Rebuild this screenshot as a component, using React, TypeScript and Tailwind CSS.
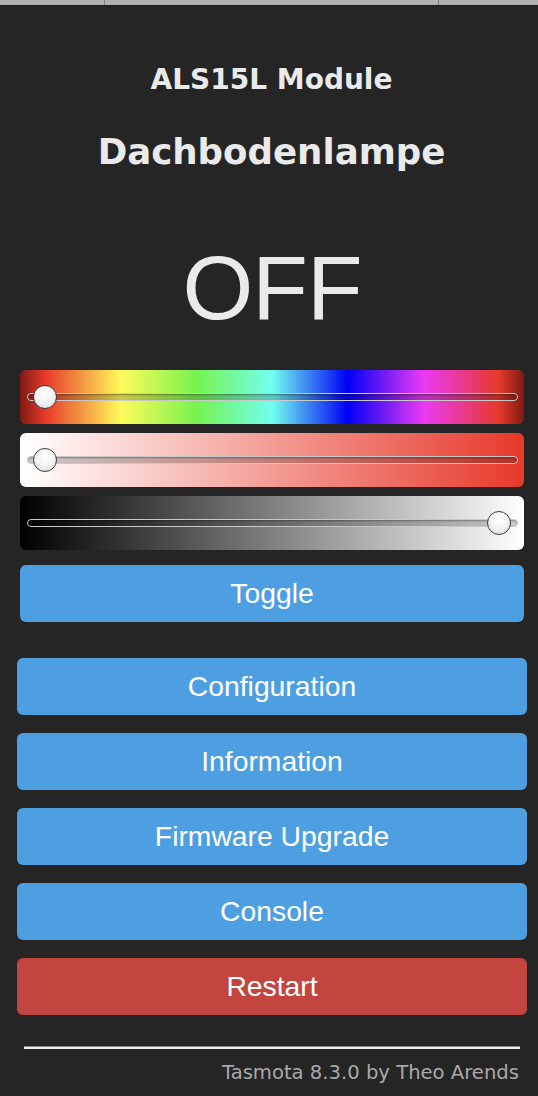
import React from "react";

const hue =
  "linear-gradient(to right, #7d1a12 0%, #e8392b 5%, #fffb5a 20%, #77f34f 35%, #72fff0 50%, #0000f5 65%, #e93af4 80%, #e8392b 95%, #7d1a12 100%)";

function Slider({ bg, thumbRight }: { bg: string; thumbRight?: boolean }) {
  return (
    <div className="relative h-[54px] rounded-[6px] flex items-center" style={{ background: bg }}>
      <div className="ml-[7px] mr-[6px] flex-1 h-[8px] rounded-full border border-[#c9c9c9] bg-black/20 shadow-[inset_0_1px_2px_rgba(0,0,0,0.35)]" />
      <div
        className={
          "absolute top-[15px] w-[24px] h-[24px] rounded-full border-[1.5px] border-[#3c3c3c] bg-[radial-gradient(circle_at_50%_35%,#ffffff_0%,#f2f2f2_50%,#d6d6d6_100%)] " +
          (thumbRight ? "right-[13px]" : "left-[13px]")
        }
      />
    </div>
  );
}

function Btn({ label, red }: { label: string; red?: boolean }) {
  return (
    <div
      className={
        "h-[57px] rounded-[6px] flex items-center justify-center text-white text-[28.3px] leading-none " +
        (red ? "bg-[#c3453f]" : "bg-[#4d9fe2]")
      }
      style={{ fontFamily: '"Liberation Sans", Arial, sans-serif' }}
    >
      {label}
    </div>
  );
}

export default function App() {
  return (
    <div className="min-h-[1096px] bg-[#252525] text-[#eaeaea]">
      <div className="flex h-[6px] bg-[#b1b1b1] border-b border-[#1c1c1c]">
        <div className="w-[105px] border-r border-[#7e7e7e]" />
        <div className="w-[334px] border-r border-[#7e7e7e]" />
        <div className="flex-1" />
      </div>

      <div className="flex flex-col items-center pt-[60px] pl-[5px]" style={{ fontFamily: '"DejaVu Sans", Verdana, sans-serif' }}>
        <div className="text-[28px] leading-[28px] font-bold">ALS15L Module</div>
        <div className="mt-[40px] text-[35.6px] leading-[35px] font-bold">Dachbodenlampe</div>
      </div>

      <div
        className="mt-[73px] pl-[6px] text-center text-[91px] leading-[91px] tracking-[-1px] text-[#eaeaea]"
        style={{ fontFamily: '"Liberation Sans", Arial, sans-serif' }}
      >
        OFF
      </div>

      <div className="mt-[37px] px-[20px]">
        <div className="w-[504px] flex flex-col gap-[9px]">
          <Slider bg={hue} />
          <Slider bg="linear-gradient(to right, #ffffff 0%, #e8392b 100%)" />
          <Slider bg="linear-gradient(to right, #000000 0%, #ffffff 100%)" thumbRight />
          <div className="mt-[6px]">
            <Btn label="Toggle" />
          </div>
        </div>
      </div>

      <div className="mt-[36px] pl-[17px] pr-[11px] flex flex-col gap-[18px]">
        <Btn label="Configuration" />
        <Btn label="Information" />
        <Btn label="Firmware Upgrade" />
        <Btn label="Console" />
        <Btn label="Restart" red />
      </div>

      <div className="mt-[31px] ml-[24px] w-[496px] border-t border-[#8a8a8a] border-b-2 border-b-[#ececec]" />

      <div
        className="mt-[13px] w-[519px] text-right text-[19.6px] leading-[22px] text-[#a9a9a9]"
        style={{ fontFamily: '"DejaVu Sans", Verdana, sans-serif' }}
      >
        Tasmota 8.3.0 by Theo Arends
      </div>
    </div>
  );
}
